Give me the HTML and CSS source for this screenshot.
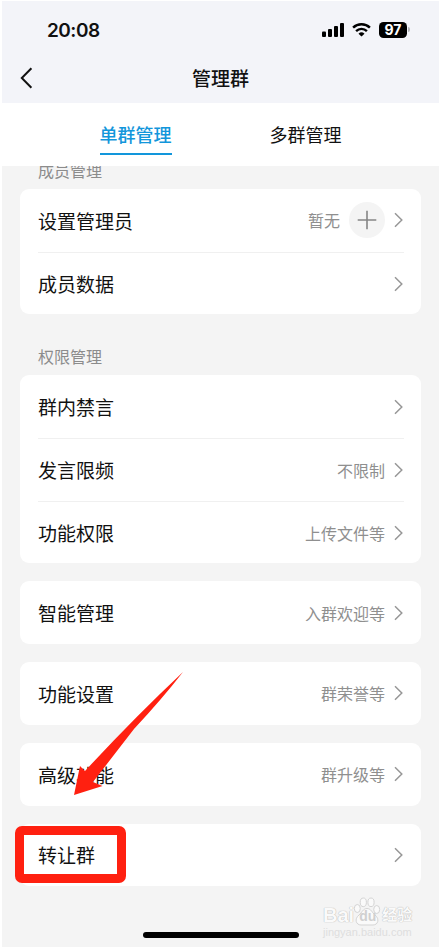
FILE: index.html
```
<!DOCTYPE html>
<html lang="zh-CN">

<head>
  <meta charset="utf-8">
  <title>管理群</title>
  <link rel="stylesheet" href="styles.css">
</head>

<body>
  <div class="screen">
    <header class="header">
      <div class="status">
        <span class="time">20:08</span>
        <div class="status-icons">
          <svg width="22" height="14" viewBox="0 0 22 14">
            <rect x="0" y="8.5" width="4" height="5.5" rx="1" />
            <rect x="6" y="6" width="4" height="8" rx="1" />
            <rect x="12" y="3" width="4" height="11" rx="1" />
            <rect x="18" y="0" width="4" height="14" rx="1" />
          </svg>
          <svg class="wifi" width="19" height="14" viewBox="0 0 19 14">
            <path class="arc" d="M1.1 4.7a12 12 0 0 1 16.8 0M4.1 8.1a7.7 7.7 0 0 1 10.8 0" />
            <path d="M9.5 13.6L6.5 10.7a4.3 4.3 0 0 1 6 0z" />
          </svg>
          <span class="battery">97</span>
        </div>
      </div>
      <div class="navbar">
        <svg class="back" width="13" height="22" viewBox="0 0 13 22"><path d="M11.4 1.2L1.8 11l9.6 9.8" /></svg>
        <h1>管理群</h1>
      </div>
    </header>

    <nav class="tabs">
      <a class="tab active">单群管理</a>
      <a class="tab">多群管理</a>
    </nav>

    <main class="content">
      <h2 class="first">成员管理</h2>
      <section class="card">
        <div class="row">
          <span class="label">设置管理员</span>
          <span class="value">暂无</span>
          <span class="add"><svg width="20" height="20" viewBox="0 0 20 20"><path d="M10 .7v18.6M.7 10h18.6" /></svg></span>
          <svg class="arrow" width="9" height="16" viewBox="0 0 9 16"><path d="M1 1.2L7.8 8 1 14.8" /></svg>
        </div>
        <div class="row">
          <span class="label">成员数据</span>
          <svg class="arrow" width="9" height="16" viewBox="0 0 9 16"><path d="M1 1.2L7.8 8 1 14.8" /></svg>
        </div>
      </section>

      <h2>权限管理</h2>
      <section class="card">
        <div class="row">
          <span class="label">群内禁言</span>
          <svg class="arrow" width="9" height="16" viewBox="0 0 9 16"><path d="M1 1.2L7.8 8 1 14.8" /></svg>
        </div>
        <div class="row">
          <span class="label">发言限频</span>
          <span class="value">不限制</span>
          <svg class="arrow" width="9" height="16" viewBox="0 0 9 16"><path d="M1 1.2L7.8 8 1 14.8" /></svg>
        </div>
        <div class="row">
          <span class="label">功能权限</span>
          <span class="value">上传文件等</span>
          <svg class="arrow" width="9" height="16" viewBox="0 0 9 16"><path d="M1 1.2L7.8 8 1 14.8" /></svg>
        </div>
      </section>

      <section class="card">
        <div class="row">
          <span class="label">智能管理</span>
          <span class="value">入群欢迎等</span>
          <svg class="arrow" width="9" height="16" viewBox="0 0 9 16"><path d="M1 1.2L7.8 8 1 14.8" /></svg>
        </div>
      </section>

      <section class="card">
        <div class="row">
          <span class="label">功能设置</span>
          <span class="value">群荣誉等</span>
          <svg class="arrow" width="9" height="16" viewBox="0 0 9 16"><path d="M1 1.2L7.8 8 1 14.8" /></svg>
        </div>
      </section>

      <section class="card">
        <div class="row">
          <span class="label">高级功能</span>
          <span class="value">群升级等</span>
          <svg class="arrow" width="9" height="16" viewBox="0 0 9 16"><path d="M1 1.2L7.8 8 1 14.8" /></svg>
        </div>
      </section>

      <section class="card">
        <div class="row">
          <span class="label">转让群</span>
          <svg class="arrow" width="9" height="16" viewBox="0 0 9 16"><path d="M1 1.2L7.8 8 1 14.8" /></svg>
        </div>
        <div class="highlight"></div>
        <svg class="pointer" width="110" height="124" viewBox="0 0 110 124">
          <path d="M109 0Q88 27 60 57L19 110 28.500 114 0 123 6 94 11 99Q60 46 109 0z" />
        </svg>
      </section>
    </main>

    <div class="home-bar"></div>

    <div class="watermark">
      <div class="brand">
        <span>Bai</span>
        <span class="paw">
          <svg width="28" height="29" viewBox="0 0 28 29">
            <ellipse cx="4.3" cy="11.5" rx="3" ry="4" />
            <ellipse cx="10.3" cy="5.3" rx="3.1" ry="4.3" />
            <ellipse cx="18" cy="5.3" rx="3.1" ry="4.3" />
            <ellipse cx="23.7" cy="12.5" rx="3" ry="4" />
            <path d="M14 11.500c-4 0-5 4-8 6.500-5 4-3 10 2 10h12c5 0 7-6 2-10-3-2.500-4-6.500-8-6.500z" />
          </svg>
          <em>du</em>
        </span>
        <span class="cn">经验</span>
      </div>
      <div class="site">jingyan.baidu.com</div>
    </div>
  </div>
</body>

</html>
```
FILE: styles.css
```
body {
  margin: 0;
  background: #fff;
  font-family: "Noto Sans CJK SC", "Noto Sans", sans-serif;
  color: #111;
}

.screen {
  position: relative;
  width: 437px;
  height: 946px;
  margin: 1px 2px 4px;
  background: #f4f4f4;
  overflow: hidden;
}

.header {
  height: 102px;
  background: #f3f4f9;
}

.status {
  display: flex;
  justify-content: space-between;
  align-items: center;
  height: 58px;
  padding: 0 29px 0 45px;
}

.time {
  font: 600 19px/24px Inter, sans-serif;
  letter-spacing: -0.5px;
  padding-top: 1px;
}

.status-icons {
  display: flex;
  align-items: center;
}

.wifi {
  margin: 0 8px;
}

.wifi .arc {
  fill: none;
  stroke: #000;
  stroke-width: 2.4;
}

.battery {
  position: relative;
  width: 28px;
  height: 16px;
  margin-right: 3px;
  border-radius: 4.5px;
  background: #000;
  color: #fff;
  font: 700 14px/16px Inter, sans-serif;
  text-align: center;
}

.battery::after {
  content: "";
  position: absolute;
  right: -3px;
  top: 5px;
  width: 2px;
  height: 5px;
  border-radius: 0 2px 2px 0;
  background: #b5b6ba;
}

.navbar {
  display: grid;
  grid-template-columns: 60px 1fr 60px;
  align-items: center;
  height: 38px;
}

.back {
  margin-left: 18px;
  fill: none;
  stroke: #111;
  stroke-width: 2;
}

h1 {
  margin: 0;
  font-size: 19px;
  font-weight: 500;
  line-height: 28px;
  text-align: center;
}

.tabs {
  display: flex;
  justify-content: center;
  gap: 98px;
  height: 63px;
  background: #fff;
}

.tab {
  box-sizing: border-box;
  height: 52px;
  padding-top: 18px;
  font-size: 18px;
  line-height: 27px;
}

.tab.active {
  color: #1296db;
  font-weight: 500;
  border-bottom: 2px solid #1296db;
}

/* scrolled a little, so the first heading slides under the tabs */
.content {
  padding: 0 18px;
  overflow: hidden;
}

h2 {
  margin: 30px 18px 7px;
  color: #8c8c8c;
  font-size: 16px;
  font-weight: 400;
  line-height: 24px;
}

h2.first {
  margin-top: -8px;
  margin-bottom: 7px;
}

.card {
  position: relative;
  margin-bottom: 18px;
  padding: 0 17px 0 18px;
  border-radius: 9px;
  background: #fff;
}

.row {
  display: flex;
  align-items: center;
  box-sizing: border-box;
  height: 62.7px;
}

.row + .row {
  border-top: 1px solid #f0f0f0;
}

.label {
  flex: 1;
  font-size: 19px;
}

.value {
  color: #8f8f8f;
  font-size: 16px;
}

.add {
  display: flex;
  align-items: center;
  justify-content: center;
  width: 36px;
  height: 36px;
  margin-left: 9px;
  border-radius: 50%;
  background: #f4f4f4;
}

.add path {
  stroke: #858585;
  stroke-width: 1.6;
}

.arrow {
  margin: 0 1px 0 9px;
  fill: none;
  stroke: #979797;
  stroke-width: 1.5;
}

.highlight {
  position: absolute;
  left: -5px;
  top: 2px;
  box-sizing: border-box;
  width: 111px;
  height: 57px;
  border: 9px solid #ff2010;
  border-radius: 7px;
}

.pointer {
  position: absolute;
  left: 54px;
  top: -152px;
  fill: #ff2010;
}

.home-bar {
  position: absolute;
  left: 141px;
  bottom: 9px;
  width: 156px;
  height: 6px;
  border-radius: 3px;
  background: #000;
}

.watermark {
  position: absolute;
  left: 321px;
  top: 896px;
  color: #fafafa;
  font-family: "Liberation Sans", "Noto Sans CJK SC", sans-serif;
}

.brand {
  display: flex;
  align-items: flex-end;
  height: 29px;
  font-size: 20px;
  font-weight: 700;
  line-height: 22px;
  text-shadow: 0 0 1px #bbb, 0 0 1px #bbb;
}

.paw {
  position: relative;
  width: 28px;
  height: 29px;
  margin-left: -1px;
}

.paw svg {
  fill: #fafafa;
  stroke: #d4d4d4;
}

.paw em {
  position: absolute;
  left: 6px;
  bottom: -1px;
  color: #d0d0d0;
  font-size: 14px;
  font-style: normal;
  text-shadow: none;
}

.cn {
  font-size: 15px;
  margin-left: 1px;
}

.site {
  color: #dedede;
  font-size: 11px;
  line-height: 12px;
}
```
